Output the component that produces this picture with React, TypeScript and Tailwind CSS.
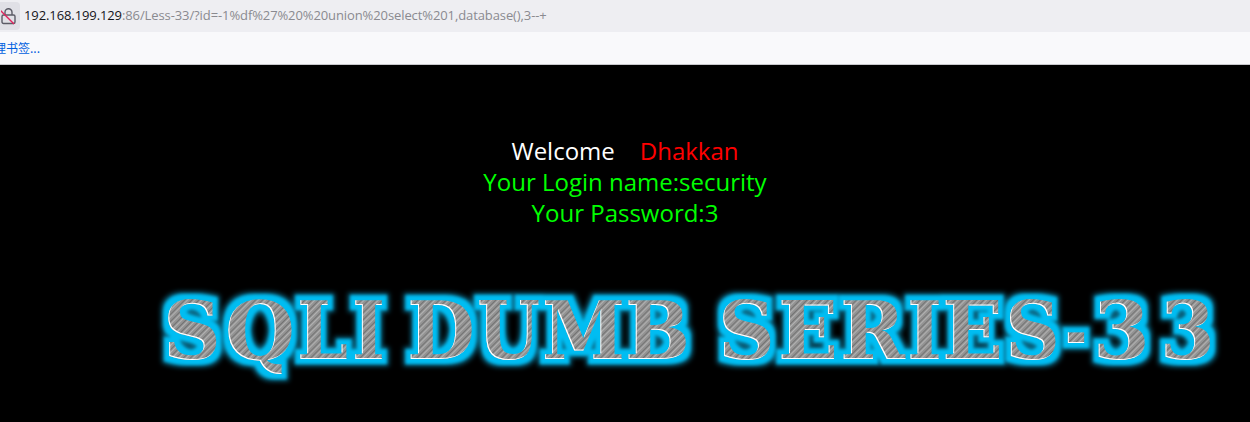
const letters: [string, number, number][] = [
  ["S", 163, 58], ["Q", 225, 70], ["L", 297, 51], ["I", 352, 33],
  ["D", 407, 68], ["U", 477, 63], ["M", 542, 83], ["B", 625, 65],
  ["S", 718, 57], ["E", 778, 60], ["R", 840, 65], ["I", 907, 35],
  ["E", 942, 61], ["S", 1005, 55], ["-", 1065, 22], ["3", 1093, 57], ["3", 1160, 55],
];

function Logo() {
  return (
    <svg width="1250" height="110" viewBox="0 285 1250 110" className="block shrink-0">
      <defs>
        <pattern id="brush" width="5" height="5" patternUnits="userSpaceOnUse" patternTransform="rotate(-45)">
          <rect width="5" height="5" fill="#939393" />
          <rect width="5" height="1" fill="#b2b2b2" />
          <rect y="3" width="5" height="1" fill="#737373" />
        </pattern>
        <filter id="glow" x="-10%" y="-40%" width="120%" height="180%" colorInterpolationFilters="sRGB">
          <feMorphology in="SourceAlpha" operator="dilate" radius="5" result="thick" />
          <feGaussianBlur in="thick" stdDeviation="1.6" result="soft" />
          <feFlood floodColor="#00bdf2" result="cyan" />
          <feComposite in="cyan" in2="soft" operator="in" result="glow1" />
          <feMorphology in="SourceAlpha" operator="dilate" radius="7" result="thick2" />
          <feGaussianBlur in="thick2" stdDeviation="2.5" result="soft2" />
          <feFlood floodColor="#0a6f8e" result="deep" />
          <feComposite in="deep" in2="soft2" operator="in" result="glow2" />
          <feOffset in="SourceAlpha" dx="1" dy="-1" result="off" />
          <feComposite in="SourceAlpha" in2="off" operator="out" result="edge" />
          <feFlood floodColor="#ffffff" result="white" />
          <feComposite in="white" in2="edge" operator="in" result="hi" />
          <feMerge>
            <feMergeNode in="glow2" />
            <feMergeNode in="glow1" />
            <feMergeNode in="SourceGraphic" />
            <feMergeNode in="hi" />
          </feMerge>
        </filter>
      </defs>
      <g filter="url(#glow)" fill="url(#brush)" fontFamily="'DejaVu Serif', serif" fontWeight="700" fontSize="80">
        {letters.map(([c, x, w], i) => (
          <text key={i} x={x} y={360} textLength={w} lengthAdjust="spacingAndGlyphs">
            {c}
          </text>
        ))}
      </g>
    </svg>
  );
}

function LockOff() {
  return (
    <svg width="16" height="18" viewBox="0 0 16 18" fill="none" className="shrink-0 -ml-[2px]">
      <rect x="1" y="8" width="13" height="8.5" rx="1.5" stroke="#5b5b66" strokeWidth="1.4" />
      <path d="M4 8V5.2a3.5 3.5 0 0 1 7 0V8" stroke="#5b5b66" strokeWidth="1.4" />
      <path d="M-1 3 13 17" stroke="#e0245e" strokeWidth="1.4" />
    </svg>
  );
}

export default function App() {
  return (
    <div className="w-[1250px] h-[422px] overflow-hidden flex flex-col bg-black font-['Open_Sans','Noto_Sans',sans-serif]">
      <div className="h-[32px] bg-[#eeeef2] flex items-center shrink-0">
        <div className="w-[20px] h-[28px] bg-[#e0e0e6] rounded-r-[4px] flex items-center justify-center overflow-hidden">
          <LockOff />
        </div>
        <div className="ml-[4px] text-[13px] tracking-[-0.1px] whitespace-nowrap text-[#8a8a90]">
          <span className="text-[#15141a]">192.168.199.129</span>
          :86/Less-33/?id=-1%df%27%20%20union%20select%201,database(),3--+
        </div>
      </div>
      <div className="h-[32px] bg-[#f9f9fb] flex items-center shrink-0 overflow-hidden">
        <span className="-ml-[18px] text-[12px] text-[#0060df] whitespace-nowrap font-['Noto_Sans_CJK_SC',sans-serif]">
          管理书签...
        </span>
      </div>
      <div className="h-px bg-[#c8c8cc] shrink-0" />
      <div className="pl-[130px] w-[1120px] pt-[70px] text-center text-[24px] leading-[31px]">
        <div>
          <span className="text-white">Welcome</span>
          <span className="text-white whitespace-pre">{"    "}</span>
          <span className="text-[#ff0000]">Dhakkan</span>
        </div>
        <div className="text-[#00ff00]">Your Login name:security</div>
        <div className="text-[#00ff00]">Your Password:3</div>
      </div>
      <div className="mt-[56px]">
        <Logo />
      </div>
    </div>
  );
}
